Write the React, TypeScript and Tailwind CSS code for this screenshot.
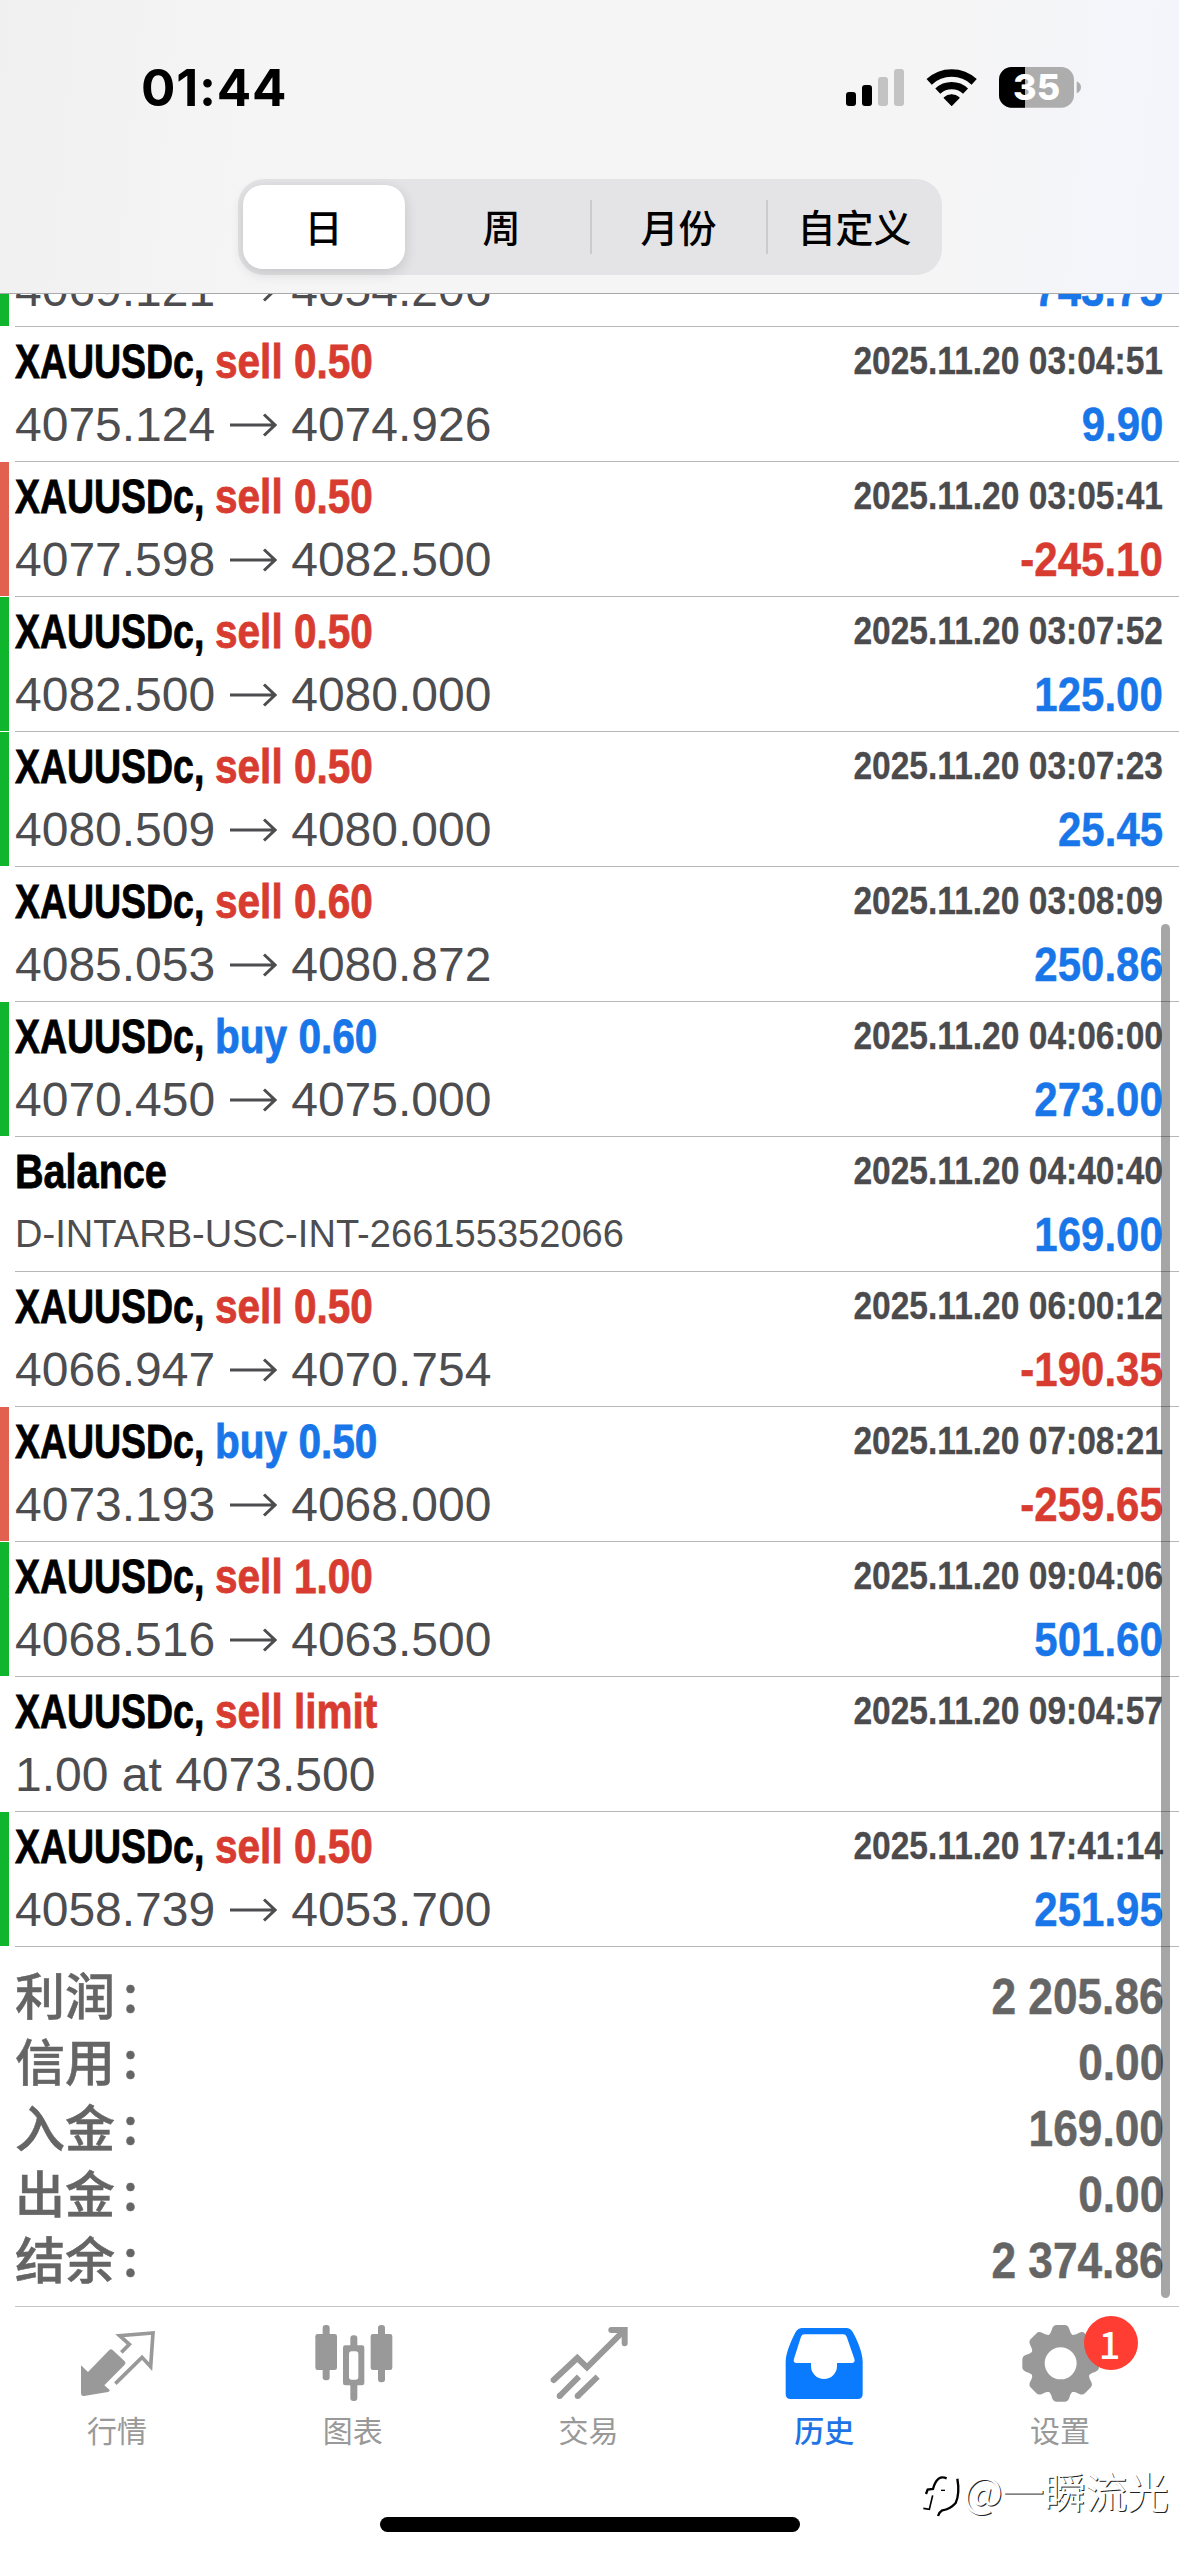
import type { ReactNode } from "react";
import clsx from "clsx";

type Deal = {
  symbol?: string;
  action?: string;
  side?: "buy" | "sell";
  title?: string;
  from?: string;
  to?: string;
  note?: string;
  comment?: string;
  time?: string;
  profit?: string;
  bar?: "green" | "red";
};

const deals: Deal[] = [
  { symbol: "XAUUSDc,", action: "sell 0.50", side: "sell", from: "4075.124", to: "4074.926", time: "2025.11.20 03:04:51", profit: "9.90" },
  { symbol: "XAUUSDc,", action: "sell 0.50", side: "sell", from: "4077.598", to: "4082.500", time: "2025.11.20 03:05:41", profit: "-245.10", bar: "red" },
  { symbol: "XAUUSDc,", action: "sell 0.50", side: "sell", from: "4082.500", to: "4080.000", time: "2025.11.20 03:07:52", profit: "125.00", bar: "green" },
  { symbol: "XAUUSDc,", action: "sell 0.50", side: "sell", from: "4080.509", to: "4080.000", time: "2025.11.20 03:07:23", profit: "25.45", bar: "green" },
  { symbol: "XAUUSDc,", action: "sell 0.60", side: "sell", from: "4085.053", to: "4080.872", time: "2025.11.20 03:08:09", profit: "250.86" },
  { symbol: "XAUUSDc,", action: "buy 0.60", side: "buy", from: "4070.450", to: "4075.000", time: "2025.11.20 04:06:00", profit: "273.00", bar: "green" },
  { title: "Balance", comment: "D-INTARB-USC-INT-266155352066", time: "2025.11.20 04:40:40", profit: "169.00" },
  { symbol: "XAUUSDc,", action: "sell 0.50", side: "sell", from: "4066.947", to: "4070.754", time: "2025.11.20 06:00:12", profit: "-190.35" },
  { symbol: "XAUUSDc,", action: "buy 0.50", side: "buy", from: "4073.193", to: "4068.000", time: "2025.11.20 07:08:21", profit: "-259.65", bar: "red" },
  { symbol: "XAUUSDc,", action: "sell 1.00", side: "sell", from: "4068.516", to: "4063.500", time: "2025.11.20 09:04:06", profit: "501.60", bar: "green" },
  { symbol: "XAUUSDc,", action: "sell limit", side: "sell", note: "1.00 at 4073.500", time: "2025.11.20 09:04:57" },
  { symbol: "XAUUSDc,", action: "sell 0.50", side: "sell", from: "4058.739", to: "4053.700", time: "2025.11.20 17:41:14", profit: "251.95", bar: "green" },
];

const totals = [
  { label: "利润", value: "2 205.86" },
  { label: "信用", value: "0.00" },
  { label: "入金", value: "169.00" },
  { label: "出金", value: "0.00" },
  { label: "结余", value: "2 374.86" },
];

const periods = ["日", "周", "月份", "自定义"];

function StatusBar() {
  return (
    <div className="flex h-[179px] items-start justify-between pl-[141px] pr-[97px]">
      <div className="mt-[57px] font-['Inter',sans-serif] text-[51px] font-bold leading-[62px] tracking-[0.8px] text-black">
        01:44
      </div>
      <svg className="mt-[66px] h-[42px] w-[236px]" viewBox="78 78 708 126">
        <rect x="78" y="156" width="30" height="42" rx="9" />
        <rect x="126" y="135" width="30" height="63" rx="9" />
        <rect x="174" y="111" width="30" height="87" rx="9" fill="#c3c3c4" />
        <rect x="222" y="87" width="30" height="111" rx="9" fill="#c3c3c4" />
        <g fill="none" stroke="#000">
          <path d="M327.5 125.6A99 99 0 0 1 462.5 125.6" strokeWidth="23" />
          <path d="M353.4 153.4A61 61 0 0 1 436.6 153.4" strokeWidth="22" />
        </g>
        <path d="M395 196L373 173A33 33 0 0 1 417 173Z" stroke="#000" strokeWidth="4" strokeLinejoin="round" />
        <rect x="537" y="81" width="225" height="122" rx="38" fill="#adadae" />
        <path d="M615 81H575A38 38 0 0 0 537 119V165A38 38 0 0 0 575 203H615Z" />
        <path d="M770 124Q783 130 783 142Q783 154 770 160Z" fill="#adadae" />
        <text x="650" y="181" textAnchor="middle" className="fill-white font-['Inter',sans-serif] text-[108px] font-extrabold">
          35
        </text>
      </svg>
    </div>
  );
}

function PeriodSwitch() {
  return (
    <div className="mx-auto flex h-[96px] w-[704px] items-center rounded-[26px] bg-[#e4e4e6] font-['Noto_Sans_CJK_SC',sans-serif] text-[38px] font-medium text-black">
      {periods.map((p, i) => (
        <div
          key={p}
          className={clsx(
            "flex h-[54px] w-[176px] items-center justify-center pb-[4px]",
            i > 1 && "border-l-2 border-[#cbcbcd]"
          )}
        >
          {i === 0 ? (
            <div className="mr-[4px] mt-[4px] flex h-[84px] w-[162px] shrink-0 items-center justify-center rounded-[20px] bg-white pb-[4px] shadow-[0_4px_14px_rgba(0,0,0,0.14)]">
              {p}
            </div>
          ) : (
            p
          )}
        </div>
      ))}
    </div>
  );
}

function Arrow() {
  return (
    <svg className="mx-[14px] h-[24px] w-[48px]" viewBox="0 0 48 24" fill="none" stroke="currentColor" strokeWidth="3">
      <path d="M1 12H46M35 1.5L46 12L35 22.5" />
    </svg>
  );
}

function Bar({ color }: { color?: "green" | "red" }) {
  return (
    <div
      className={clsx(
        "mr-[6px] h-[134px] w-[9px] shrink-0",
        color === "green" && "bg-[#10b52e]",
        color === "red" && "bg-[#e2604f]"
      )}
    />
  );
}

function DealRow({ deal }: { deal: Deal }) {
  const negative = deal.profit?.startsWith("-");

  return (
    <div className="flex h-[135px] shrink-0">
      <Bar color={deal.bar} />
      <div className="flex flex-1 justify-between border-b border-[#b6b7b9] pr-[16px] pt-[5px]">
        <div>
          <div className="flex h-[60px] whitespace-nowrap text-[48px] font-bold leading-[60px] [-webkit-text-stroke:0.8px]">
            {deal.title ? (
              <span className="origin-left scale-x-[.825] text-black">{deal.title}</span>
            ) : (
              <>
                <span className="w-[200px] text-black">
                  <span className="inline-block origin-left scale-x-[.78]">{deal.symbol}</span>
                </span>
                <span
                  className={clsx(
                    "inline-block origin-left scale-x-[.845]",
                    deal.side === "sell" ? "text-[#d83c31]" : "text-[#1976e8]"
                  )}
                >
                  {deal.action}
                </span>
              </>
            )}
          </div>
          {deal.comment ? (
            <div className="text-[38px] leading-[64px] tracking-[0.05px] text-[#4d4d50]">{deal.comment}</div>
          ) : (
            <div className="flex items-center text-[48px] leading-[66px] text-[#4d4d50]">
              {deal.note ?? (
                <>
                  {deal.from}
                  <Arrow />
                  {deal.to}
                </>
              )}
            </div>
          )}
        </div>
        <div className="flex flex-col items-end whitespace-nowrap font-bold">
          <div className="h-[58px] origin-right scale-x-[.86] text-[39px] leading-[58px] text-[#4b4b4e] [-webkit-text-stroke:0.3px]">
            {deal.time}
          </div>
          {deal.profit && (
            <div
              className={clsx(
                "origin-right scale-x-[.875] text-[48px] leading-[70px] [-webkit-text-stroke:0.5px]",
                negative ? "text-[#d83c31]" : "text-[#1976e8]"
              )}
            >
              {deal.profit}
            </div>
          )}
        </div>
      </div>
    </div>
  );
}

function Totals() {
  return (
    <div className="ml-[15px] h-[360px] border-b border-[#c6c6c8] pr-[15px] pt-[17px] text-[#656565]">
      {totals.map((t) => (
        <div key={t.label} className="flex h-[66px] items-center justify-between">
          <div className="flex font-['Noto_Sans_CJK_SC',sans-serif] text-[50px] font-medium leading-[60px] [-webkit-text-stroke:0.5px]">
            <span className="-mt-[9px]">{t.label}</span>
            <span className="-mt-[12px] ml-[8px]">:</span>
          </div>
          <div className="origin-right scale-x-[.885] whitespace-nowrap text-[50px] font-bold leading-[66px] [-webkit-text-stroke:0.5px]">
            {t.value}
          </div>
        </div>
      ))}
    </div>
  );
}

function Tab({ label, active, children }: { label: string; active?: boolean; children: ReactNode }) {
  return (
    <div
      className={clsx(
        "relative flex flex-1 flex-col items-center pt-[15px] font-['Noto_Sans_CJK_SC',sans-serif] text-[30px] leading-[44px]",
        active ? "font-medium text-[#1e74e6]" : "text-[#999]"
      )}
    >
      {children}
      <span className="mr-[2px] mt-[5px]">{label}</span>
    </div>
  );
}

function TabBar() {
  return (
    <div className="flex h-[210px]">
      <Tab label="行情">
        <svg className="size-20" viewBox="54 36 240 240" fill="#999">
          <path d="M63 166L84 186L148 120Q153 116 158 120L194 154Q199 159 194 164L133 226L149 240Q150 245 144 246L72 258Q63 259 63 249Z" />
          <path d="M184 127L208 103L179 77L279 69L272 170L246 142L166 221" fill="none" stroke="#999" strokeWidth="11" />
        </svg>
      </Tab>
      <Tab label="图表">
        <svg className="size-20" viewBox="761 36 240 240" fill="#999">
          <rect x="787" y="45" width="21" height="166" rx="9" />
          <rect x="765" y="72" width="65" height="108" rx="7" />
          <rect x="953" y="45" width="21" height="172" rx="9" />
          <rect x="931" y="72" width="65" height="108" rx="7" />
          <rect x="870" y="76" width="21" height="197" rx="9" />
          <rect x="848" y="106" width="64" height="120" rx="7" />
          <rect x="866" y="124" width="28" height="85" rx="8" fill="#fff" />
        </svg>
      </Tab>
      <Tab label="交易">
        <svg className="size-20" viewBox="58 36 240 240" fill="none" stroke="#999" strokeWidth="18">
          <path d="M72 210L143 144L172 172L283 62" strokeLinecap="round" />
          <path d="M245 60H285V100" strokeLinecap="round" />
          <path d="M90 258L148 200M144 258L204 200" />
          <path d="M90 258h.1M144 258h.1" strokeLinecap="round" />
        </svg>
      </Tab>
      <Tab label="历史" active>
        <svg className="size-20" viewBox="766 36 240 240" fill="#0a7aff">
          <path
            fillRule="evenodd"
            d="M768 155C768 128 786 88 798 66Q805 54 818 54H950Q962 54 969 66C982 88 999 128 999 155V252Q999 267 984 267H783Q768 267 768 252ZM824 73Q817 73 814 80L793 146Q789 158 801 159H844V168A39 39 0 0 0 922 168V159H966Q978 158 974 146L951 80Q948 73 941 73Z"
          />
        </svg>
      </Tab>
      <Tab label="设置">
        <svg className="size-20" viewBox="-119 -124 240 240" fill="#999">
          <circle r="70" fill="none" stroke="#999" strokeWidth="44" />
          {[0, 45, 90, 135, 180, 225, 270, 315].map((deg) => (
            <path
              key={deg}
              transform={`rotate(${deg})`}
              d="M-38 -83Q-30 -88 -26 -103Q-22 -115 -12 -115H12Q22 -115 26 -103Q30 -88 38 -83Z"
            />
          ))}
        </svg>
        <div className="absolute left-[141px] top-[9px] flex size-[54px] items-center justify-center rounded-full bg-[#ff3d33] pr-[3px] font-['Noto_Sans_CJK_SC',sans-serif] text-[38px] font-medium leading-[50px] text-white">
          1
        </div>
      </Tab>
    </div>
  );
}

function Watermark() {
  return (
    <div className="absolute left-[920px] top-[2464px] flex h-[52px] items-center">
      <svg className="mt-[8px] h-[52px] w-[43px]" viewBox="30 84 129 156" fill="none" stroke="#000" strokeWidth="7">
        <path d="M48 162L53 149L69 147Q74 126 86 116Q96 109 110 115" />
        <path d="M142 116Q150 160 137 189Q120 208 97 211Q88 216 84 228" />
        <path d="M68 166L58 208L40 205" strokeWidth="5" />
        <path d="M93 151H105" strokeWidth="4" />
      </svg>
      <span className="whitespace-nowrap font-['Noto_Sans_CJK_SC',sans-serif] text-[42px] leading-[52px] tracking-[-0.5px] text-white [text-shadow:1px_1px_0_#222]">
        @一瞬流光
      </span>
    </div>
  );
}

export default function App() {
  return (
    <div className="relative flex h-[2556px] w-[1179px] flex-col overflow-hidden bg-white font-['Liberation_Sans',sans-serif]">
      <header className="h-[294px] shrink-0 border-b border-[#a9a9ab] bg-[linear-gradient(95deg,#f0f0f0_0%,#f6f5f5_22%,#f5f5f6_80%,#f4f5fc_100%)]">
        <StatusBar />
        <PeriodSwitch />
      </header>

      {/* row scrolled half way under the header */}
      <div className="flex h-[33px] shrink-0 flex-col justify-end overflow-hidden">
        <DealRow deal={{ from: "4069.121", to: "4054.206", profit: "743.75", bar: "green" }} />
      </div>

      {deals.map((deal) => (
        <DealRow key={deal.time} deal={deal} />
      ))}
      <Totals />
      <TabBar />

      <div className="absolute left-[1161px] top-[924px] h-[1374px] w-[9px] rounded-full bg-black/35" />
      <div className="absolute left-[380px] top-[2517px] h-[15px] w-[420px] rounded-full bg-black" />
      <Watermark />
    </div>
  );
}
